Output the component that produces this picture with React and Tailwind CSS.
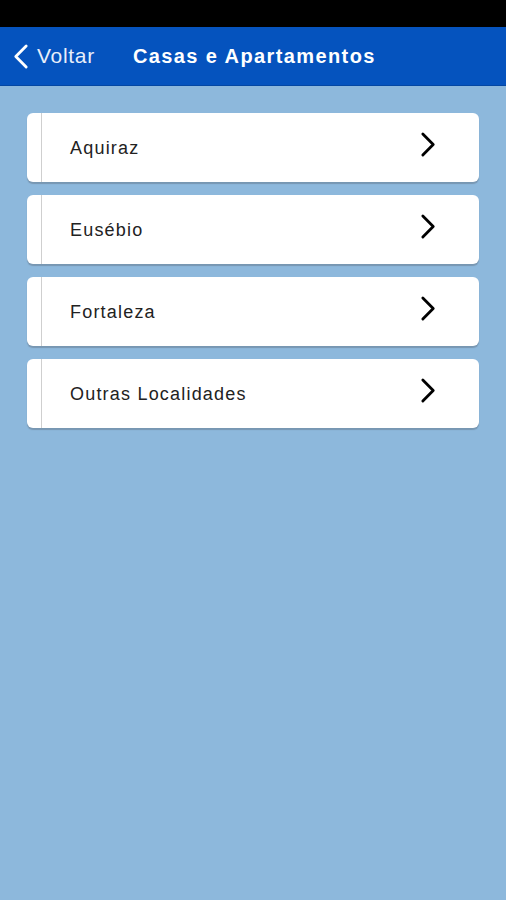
const places = ["Aquiraz", "Eusébio", "Fortaleza", "Outras Localidades"];

function Chevron({ className }) {
  return (
    <svg viewBox="0 0 18 28" className={className} fill="none" stroke="currentColor" strokeWidth="3" strokeLinecap="round" strokeLinejoin="round">
      <path d="M3 3l11 11L3 25" />
    </svg>
  );
}

export default function App() {
  return (
    <div className="flex min-h-[900px] flex-col bg-[#8db8dc] font-['Liberation_Sans',Arial,sans-serif]">
      <div className="h-[27px] bg-black" />
      <div className="flex h-[59px] items-center border-b border-[#0447a3] bg-[#0553be] text-white">
        <div className="flex items-center pl-[12px]">
          <Chevron className="h-[27px] w-[17px] -scale-x-100" />
          <span className="ml-[8px] text-[21px] tracking-[0.7px] text-[#e8eefa]">Voltar</span>
        </div>
        <h1 className="ml-[38px] text-[20px] font-bold tracking-[1.4px]">Casas e Apartamentos</h1>
      </div>
      <div className="flex flex-col gap-[13px] px-[27px] pt-[27px]">
        {places.map((name) => (
          <div key={name} className="flex h-[69px] items-center rounded-[6px] bg-white shadow-[0_2px_1px_rgba(80,90,100,0.35)]">
            <div className="ml-[14px] h-full w-px bg-[#cfcfcf]" />
            <span className="ml-[28px] mt-[2px] flex-1 text-[18px] tracking-[1.2px] text-[#222]">{name}</span>
            <Chevron className="mr-[42px] mb-[6px] h-[27px] w-[17px] text-black" />
          </div>
        ))}
      </div>
    </div>
  );
}
